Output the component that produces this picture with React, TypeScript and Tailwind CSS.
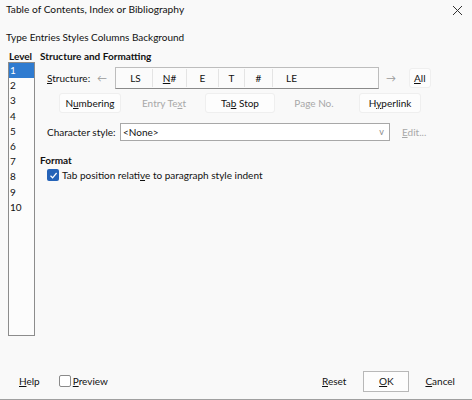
import React from 'react';

// @ one level row in the left list
const levels = ['1', '2', '3', '4', '5', '6', '7', '8', '9', '10'];

// @ tokens in the structure box
const tokens = [
    { label: 'LS', w: 'w-[34px]' },
    { label: 'N#', w: 'w-[34px]', u: true },
    { label: 'E', w: 'w-[32px]' },
    { label: 'T', w: 'w-[26px]' },
    { label: '#', w: 'w-[28px]' },
];

const Btn: React.FC<{ w: string; children: React.ReactNode; off?: boolean; cls?: string }> = ({ w, children, off, cls = '' }) => (
    <span
        className={`${w} h-[20px] flex items-center justify-center rounded-[3px] ${off ? 'text-[#a8a8a8]' : 'bg-[#fdfdfd] border border-[#efefef]'} ${cls}`}
    >
        <span className="whitespace-nowrap">{children}</span>
    </span>
);

const App: React.FC = () => {
    return (
        <div className="w-[472px] h-[400px] bg-[#f9f9f9] text-[#111] flex flex-col font-['Lato',sans-serif] text-[10px] overflow-hidden border-b border-[#a0a0a0]">
            {/* Title bar */}
            <div className="h-[20px] flex items-center justify-between pl-[6px] pr-[9px] text-[10.2px]">
                <span>Table of Contents, Index or Bibliography</span>
                <svg width="11" height="11" viewBox="0 0 11 11" className="mt-[1px]">
                    <path d="M1 1 L10 10 M10 1 L1 10" stroke="#333" strokeWidth="1" />
                </svg>
            </div>

            {/* Tabs */}
            <div className="h-[16px] mt-[9px] flex items-center pl-[6px]">
                <span>Type Entries Styles Columns Background</span>
            </div>

            {/* Main */}
            <div className="flex flex-1 mt-[5px]">
                {/* Level list */}
                <div className="ml-[8px] w-[27px] flex flex-col">
                    <div className="h-[12px] leading-[13px] font-bold pl-[1px]">Level</div>
                    <div className="h-[274px] border border-[#8c8c8c] bg-[#fcfcfc]">
                        {levels.map((lv, i) => (
                            <div
                                key={lv}
                                className={`h-[15.2px] leading-[15.2px] pl-[1px] ${i === 0 ? 'bg-[#2f7bd0] text-white' : ''}`}
                            >
                                {lv}
                            </div>
                        ))}
                    </div>
                </div>

                {/* Right side */}
                <div className="flex-1 ml-[5px] flex flex-col">
                    <div className="h-[13px] leading-[13px] font-bold">Structure and Formatting</div>

                    {/* Structure row */}
                    <div className="flex items-center h-[22px] mt-[4px] pl-[7px]">
                        <span className="w-[50px] whitespace-nowrap"><u>S</u>tructure:</span>
                        <span className="w-[18px] text-[#9a9a9a] text-left">←</span>
                        <div className="w-[264px] h-[22px] border border-[#bdbdbd] border-b-[#8a8a8a] bg-[#fbfbfb] flex items-center pl-[3px]">
                            {tokens.map((t) => (
                                <span key={t.label} className={`${t.w} h-[18px] flex items-center justify-center border-r border-[#e4e4e4]`}>
                                    <span>{t.u ? <><u>N</u>#</> : t.label}</span>
                                </span>
                            ))}
                            <span className="pl-[13px]">LE</span>
                        </div>
                        <span className="w-[24px] text-[#9a9a9a] text-center">→</span>
                        <span className="ml-[6px] px-[4px] h-[20px] flex items-center bg-[#fdfdfd] border border-[#efefef] rounded-[3px]"><span><u>A</u>ll</span></span>
                    </div>

                    {/* Insert buttons */}
                    <div className="flex items-center h-[20px] mt-[4px] pl-[19px]">
                        <Btn w="w-[62px]">N<u>u</u>mbering</Btn>
                        <Btn w="w-[62px]" cls="ml-[12px]" off>Entry Te<u>x</u>t</Btn>
                        <Btn w="w-[70px]" cls="ml-[10px]">Ta<u>b</u> Stop</Btn>
                        <Btn w="w-[56px]" cls="ml-[11px]" off>Pa<u>g</u>e No.</Btn>
                        <Btn w="w-[62px]" cls="ml-[17px]">H<u>y</u>perlink</Btn>
                    </div>

                    {/* Character style */}
                    <div className="flex items-center h-[18px] mt-[10px] pl-[7px]">
                        <span className="w-[73px] whitespace-nowrap">Character style:</span>
                        <div className="w-[270px] h-[18px] border border-[#a8a8a8] bg-white flex items-center justify-between pl-[2px] pr-[5px]">
                            <span>&lt;None&gt;</span>
                            <span className="text-[#8a8a8a] text-[9px]">v</span>
                        </div>
                        <span className="ml-[12px] text-[#a8a8a8]"><u>E</u>dit...</span>
                    </div>

                    {/* Format */}
                    <div className="h-[14px] leading-[14px] font-bold mt-[12px]">Format</div>
                    <div className="flex items-center h-[16px] pl-[7px]">
                        <span className="w-[12px] h-[12px] rounded-[2px] bg-[#2563b8] flex items-center justify-center">
                            <svg width="9" height="9" viewBox="0 0 9 9">
                                <path d="M1.5 4.8 L3.6 6.8 L7.6 2" stroke="white" strokeWidth="1.2" fill="none" />
                            </svg>
                        </span>
                        <span className="ml-[3px]">Tab position relati<u>v</u>e to paragraph style indent</span>
                    </div>
                </div>
            </div>

            {/* Footer */}
            <div className="h-[22px] mb-[7px] flex items-center pl-[19px] pr-[17px]">
                <span><u>H</u>elp</span>
                <span className="ml-[19px] w-[12px] h-[12px] border border-[#8a8a8a] bg-white rounded-[2px]"></span>
                <span className="ml-[2px]"><u>P</u>review</span>
                <span className="ml-auto"><u>R</u>eset</span>
                <span className="ml-[17px] w-[46px] h-[21px] border border-[#b8b8b8] bg-[#fdfdfd] flex items-center justify-center"><span><u>O</u>K</span></span>
                <span className="ml-[16px]"><u>C</u>ancel</span>
            </div>
        </div>
    );
};

export default App;
